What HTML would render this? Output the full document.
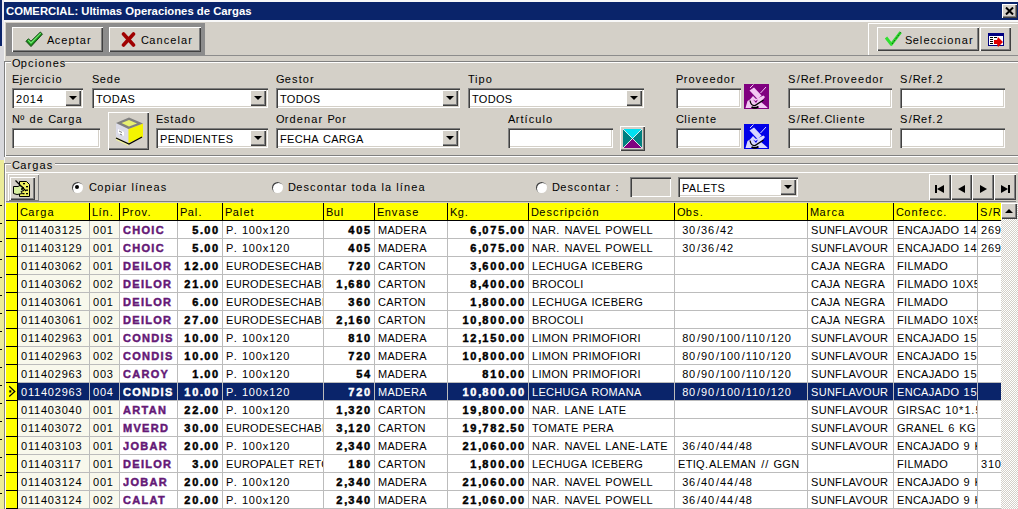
<!DOCTYPE html><html><head><meta charset="utf-8"><style>
html,body{margin:0;padding:0;}
body{width:1018px;height:509px;position:relative;overflow:hidden;background:#d4d0c8;font-family:"Liberation Sans",sans-serif;font-size:12px;color:#000;}
.t{position:absolute;white-space:pre;line-height:14px;font-size:11px;}
.c{position:absolute;white-space:pre;overflow:hidden;line-height:17px;height:17px;font-size:11px;}
i{font-style:normal;}
.d{letter-spacing:0.8px;} .u{letter-spacing:0.3px;} .l{letter-spacing:1.1px;} .s{letter-spacing:1px;padding-left:1px;} .p{letter-spacing:1.1px;}
.b{font-weight:bold;-webkit-text-stroke:0.45px currentColor;}
.b .d{letter-spacing:1.8px;} .b .u{letter-spacing:1.3px;} .b .p{letter-spacing:1px;}
.r{text-align:right;}
.ti i{letter-spacing:0 !important;}
</style></head><body>

<div style="position:absolute;left:0px;top:0px;width:4px;height:509px;background:#ecec98;"></div>
<div style="position:absolute;left:0px;top:46px;width:4px;height:114px;background:#d8d8dc;"></div>
<div style="position:absolute;left:0px;top:0px;width:2px;height:46px;background:#0a246a;"></div>
<div style="position:absolute;left:2px;top:0px;width:2px;height:46px;background:#e8e8f0;"></div>
<div style="position:absolute;left:0px;top:205px;width:2px;height:1px;background:#000;"></div>
<div style="position:absolute;left:0px;top:223px;width:2px;height:1px;background:#000;"></div>
<div style="position:absolute;left:0px;top:241px;width:2px;height:1px;background:#000;"></div>
<div style="position:absolute;left:0px;top:259px;width:2px;height:1px;background:#000;"></div>
<div style="position:absolute;left:0px;top:277px;width:2px;height:1px;background:#000;"></div>
<div style="position:absolute;left:0px;top:295px;width:2px;height:1px;background:#000;"></div>
<div style="position:absolute;left:0px;top:313px;width:2px;height:1px;background:#000;"></div>
<div style="position:absolute;left:0px;top:331px;width:2px;height:1px;background:#000;"></div>
<div style="position:absolute;left:0px;top:349px;width:2px;height:1px;background:#000;"></div>
<div style="position:absolute;left:0px;top:367px;width:2px;height:1px;background:#000;"></div>
<div style="position:absolute;left:0px;top:385px;width:2px;height:1px;background:#000;"></div>
<div style="position:absolute;left:0px;top:403px;width:2px;height:1px;background:#000;"></div>
<div style="position:absolute;left:0px;top:421px;width:2px;height:1px;background:#000;"></div>
<div style="position:absolute;left:0px;top:439px;width:2px;height:1px;background:#000;"></div>
<div style="position:absolute;left:0px;top:457px;width:2px;height:1px;background:#000;"></div>
<div style="position:absolute;left:0px;top:475px;width:2px;height:1px;background:#000;"></div>
<div style="position:absolute;left:0px;top:493px;width:2px;height:1px;background:#000;"></div>
<div style="position:absolute;left:4px;top:0px;width:1014px;height:2px;background:#f8f8f8;"></div>
<div style="position:absolute;left:4px;top:2px;width:1014px;height:18px;background:#0a246a;"></div>
<div class="t" style="left:6px;top:4px;color:#fff;font-weight:bold;font-size:11.3px;">COMERCIAL: Ultimas Operaciones de Cargas</div>
<div style="position:absolute;left:4px;top:20px;width:1014px;height:2px;background:#f8f8f8;"></div>
<div style="position:absolute;left:1002px;top:4px;width:15px;height:14px;background:#d4d0c8;box-shadow:inset 1px 1px 0 #fff, inset -1px -1px 0 #404040, inset -2px -2px 0 #808080;"></div>
<svg style="position:absolute;left:1005px;top:7px" width="9" height="8" viewBox="0 0 9 8"><path d="M1 0.5 L8 7.5 M8 0.5 L1 7.5" stroke="#000" stroke-width="2"/></svg>
<div style="position:absolute;left:4px;top:22px;width:1px;height:487px;background:#f4f4f0;"></div>
<div style="position:absolute;left:6px;top:23px;width:199px;height:33px;background:#8c8c8c;"></div>
<div style="position:absolute;left:12px;top:27px;width:91px;height:25px;background:#d4d0c8;box-shadow:inset 1px 1px 0 #fff, inset -1px -1px 0 #404040, inset -2px -2px 0 #808080;"></div>
<div style="position:absolute;left:109px;top:27px;width:92px;height:25px;background:#d4d0c8;box-shadow:inset 1px 1px 0 #fff, inset -1px -1px 0 #404040, inset -2px -2px 0 #808080;"></div>
<svg style="position:absolute;left:18px;top:26px" width="30" height="26" viewBox="0 0 30 26"><path d="M8 15.3 L10.4 12.8 L13 15.2 L22.4 6 L24.4 8.2 L13 20.6 Z" fill="#189018" stroke="#0a3a0a" stroke-width="0.9" stroke-linejoin="round"/><path d="M9.6 14.2 L10.4 13.4 L13 15.9 L22.4 6.8 L23.2 7.6 L13 18 Z" fill="#70e870"/></svg>
<div class="t" style="left:47px;top:33px;"><i class="u">A</i><i class="l">ceptar</i></div>
<svg style="position:absolute;left:121px;top:32px" width="15" height="15" viewBox="0 0 15 15"><path d="M2.5 2 L12.5 13 M12.5 2 L2.5 13" fill="none" stroke="#a00000" stroke-width="3.6" stroke-linecap="round"/></svg>
<div class="t" style="left:141px;top:33px;"><i class="u">C</i><i class="l">ancelar</i></div>
<div style="position:absolute;left:205px;top:55px;width:813px;height:1px;background:#8c8c8c;"></div>
<div style="position:absolute;left:868px;top:23px;width:150px;height:32px;background:#d4d0c8;box-shadow:inset 1px 1px 0 #fff;"></div>
<div style="position:absolute;left:877px;top:27px;width:102px;height:24px;background:#d4d0c8;box-shadow:inset 1px 1px 0 #fff, inset -1px -1px 0 #404040, inset -2px -2px 0 #808080;"></div>
<svg style="position:absolute;left:884px;top:31px" width="18" height="16" viewBox="0 0 18 16"><path d="M2 6.5 L7.3 13.3 L16.7 1.2" fill="none" stroke="#30e030" stroke-width="3" stroke-linejoin="round"/><path d="M8 13 L16.7 1.2" fill="none" stroke="#000" stroke-width="0.8" stroke-dasharray="1 1"/></svg>
<div class="t" style="left:905px;top:33px;"><i class="u">S</i><i class="l">eleccionar</i></div>
<div style="position:absolute;left:980px;top:27px;width:31px;height:24px;background:#d4d0c8;box-shadow:inset 1px 1px 0 #fff, inset -1px -1px 0 #404040, inset -2px -2px 0 #808080;"></div>
<svg style="position:absolute;left:988px;top:33px" width="16" height="14" viewBox="0 0 16 14">
<rect x="0" y="0" width="16" height="13" fill="#000080"/>
<rect x="1" y="3" width="14" height="9" fill="#fff"/>
<rect x="2" y="4" width="3" height="1" fill="#000"/><rect x="2" y="6" width="3" height="1" fill="#000"/><rect x="2" y="8" width="3" height="1" fill="#000"/><rect x="2" y="10" width="3" height="1" fill="#000"/>
<rect x="6" y="4" width="3" height="1" fill="#000"/>
<path d="M6 7 L9 7 L10 4 L15 9 L10 14 L9 11 L6 11 Z" fill="#e00000"/>
</svg>
<div style="position:absolute;left:4px;top:61px;width:1020px;height:96px;box-shadow:inset 1px 1px 0 #808080, inset 2px 2px 0 #fff, inset -1px -1px 0 #fff, inset -2px -2px 0 #808080;"></div>
<div style="position:absolute;left:11px;top:58px;width:54px;height:9px;background:#d4d0c8;"></div>
<div class="t" style="left:12px;top:56px;"><i class="u">O</i><i class="l">pciones</i></div>
<div class="t" style="left:12px;top:72px;"><i class="u">E</i><i class="l">jercicio</i></div>
<div style="position:absolute;left:12px;top:88px;width:71px;height:20px;background:#fff;box-shadow:inset 1px 1px 0 #808080, inset 2px 2px 0 #404040, inset -1px -1px 0 #fff, inset -2px -2px 0 #d4d0c8;"></div>
<div style="position:absolute;left:65px;top:90px;width:16px;height:16px;background:#d4d0c8;box-shadow:inset 1px 1px 0 #fff, inset -1px -1px 0 #404040, inset -2px -2px 0 #808080;"></div>
<div style="position:absolute;left:69px;top:96px;width:0;height:0;border-left:4px solid transparent;border-right:4px solid transparent;border-top:4px solid #000;"></div>
<div class="t" style="left:16px;top:92px;"><i class="d">2014</i></div>
<div class="t" style="left:92px;top:72px;"><i class="u">S</i><i class="l">ede</i></div>
<div style="position:absolute;left:92px;top:88px;width:176px;height:20px;background:#fff;box-shadow:inset 1px 1px 0 #808080, inset 2px 2px 0 #404040, inset -1px -1px 0 #fff, inset -2px -2px 0 #d4d0c8;"></div>
<div style="position:absolute;left:250px;top:90px;width:16px;height:16px;background:#d4d0c8;box-shadow:inset 1px 1px 0 #fff, inset -1px -1px 0 #404040, inset -2px -2px 0 #808080;"></div>
<div style="position:absolute;left:254px;top:96px;width:0;height:0;border-left:4px solid transparent;border-right:4px solid transparent;border-top:4px solid #000;"></div>
<div class="t" style="left:96px;top:92px;"><i class="u">TODAS</i></div>
<div class="t" style="left:276px;top:72px;"><i class="u">G</i><i class="l">estor</i></div>
<div style="position:absolute;left:276px;top:88px;width:184px;height:20px;background:#fff;box-shadow:inset 1px 1px 0 #808080, inset 2px 2px 0 #404040, inset -1px -1px 0 #fff, inset -2px -2px 0 #d4d0c8;"></div>
<div style="position:absolute;left:442px;top:90px;width:16px;height:16px;background:#d4d0c8;box-shadow:inset 1px 1px 0 #fff, inset -1px -1px 0 #404040, inset -2px -2px 0 #808080;"></div>
<div style="position:absolute;left:446px;top:96px;width:0;height:0;border-left:4px solid transparent;border-right:4px solid transparent;border-top:4px solid #000;"></div>
<div class="t" style="left:280px;top:92px;"><i class="u">TODOS</i></div>
<div class="t" style="left:468px;top:72px;"><i class="u">T</i><i class="l">ipo</i></div>
<div style="position:absolute;left:468px;top:88px;width:176px;height:20px;background:#fff;box-shadow:inset 1px 1px 0 #808080, inset 2px 2px 0 #404040, inset -1px -1px 0 #fff, inset -2px -2px 0 #d4d0c8;"></div>
<div style="position:absolute;left:626px;top:90px;width:16px;height:16px;background:#d4d0c8;box-shadow:inset 1px 1px 0 #fff, inset -1px -1px 0 #404040, inset -2px -2px 0 #808080;"></div>
<div style="position:absolute;left:630px;top:96px;width:0;height:0;border-left:4px solid transparent;border-right:4px solid transparent;border-top:4px solid #000;"></div>
<div class="t" style="left:472px;top:92px;"><i class="u">TODOS</i></div>
<div class="t" style="left:676px;top:72px;"><i class="u">P</i><i class="l">roveedor</i></div>
<div style="position:absolute;left:676px;top:88px;width:65px;height:20px;background:#fff;box-shadow:inset 1px 1px 0 #808080, inset 2px 2px 0 #404040, inset -1px -1px 0 #fff, inset -2px -2px 0 #d4d0c8;"></div>
<div class="t" style="left:788px;top:72px;"><i class="u">S</i><i class="s">/</i><i class="u">R</i><i class="l">ef</i><i class="p">.</i><i class="u">P</i><i class="l">roveedor</i></div>
<div style="position:absolute;left:788px;top:88px;width:104px;height:20px;background:#fff;box-shadow:inset 1px 1px 0 #808080, inset 2px 2px 0 #404040, inset -1px -1px 0 #fff, inset -2px -2px 0 #d4d0c8;"></div>
<div class="t" style="left:900px;top:72px;"><i class="u">S</i><i class="s">/</i><i class="u">R</i><i class="l">ef</i><i class="p">.</i><i class="d">2</i></div>
<div style="position:absolute;left:900px;top:88px;width:105px;height:20px;background:#fff;box-shadow:inset 1px 1px 0 #808080, inset 2px 2px 0 #404040, inset -1px -1px 0 #fff, inset -2px -2px 0 #d4d0c8;"></div>
<div class="t" style="left:12px;top:112px;"><i class="u">N</i><i class="l">º</i><i class="p"> </i><i class="l">de</i><i class="p"> </i><i class="u">C</i><i class="l">arga</i></div>
<div style="position:absolute;left:12px;top:128px;width:88px;height:20px;background:#fff;box-shadow:inset 1px 1px 0 #808080, inset 2px 2px 0 #404040, inset -1px -1px 0 #fff, inset -2px -2px 0 #d4d0c8;"></div>
<div style="position:absolute;left:108px;top:112px;width:41px;height:38px;background:#d4d0c8;box-shadow:inset 1px 1px 0 #fff, inset -1px -1px 0 #404040, inset -2px -2px 0 #808080;"></div>
<div class="t" style="left:156px;top:112px;"><i class="u">E</i><i class="l">stado</i></div>
<div style="position:absolute;left:156px;top:128px;width:112px;height:20px;background:#fff;box-shadow:inset 1px 1px 0 #808080, inset 2px 2px 0 #404040, inset -1px -1px 0 #fff, inset -2px -2px 0 #d4d0c8;"></div>
<div style="position:absolute;left:250px;top:130px;width:16px;height:16px;background:#d4d0c8;box-shadow:inset 1px 1px 0 #fff, inset -1px -1px 0 #404040, inset -2px -2px 0 #808080;"></div>
<div style="position:absolute;left:254px;top:136px;width:0;height:0;border-left:4px solid transparent;border-right:4px solid transparent;border-top:4px solid #000;"></div>
<div class="t" style="left:160px;top:132px;"><i class="u">PENDIENTES</i></div>
<div class="t" style="left:276px;top:112px;"><i class="u">O</i><i class="l">rdenar</i><i class="p"> </i><i class="u">P</i><i class="l">or</i></div>
<div style="position:absolute;left:276px;top:128px;width:184px;height:20px;background:#fff;box-shadow:inset 1px 1px 0 #808080, inset 2px 2px 0 #404040, inset -1px -1px 0 #fff, inset -2px -2px 0 #d4d0c8;"></div>
<div style="position:absolute;left:442px;top:130px;width:16px;height:16px;background:#d4d0c8;box-shadow:inset 1px 1px 0 #fff, inset -1px -1px 0 #404040, inset -2px -2px 0 #808080;"></div>
<div style="position:absolute;left:446px;top:136px;width:0;height:0;border-left:4px solid transparent;border-right:4px solid transparent;border-top:4px solid #000;"></div>
<div class="t" style="left:280px;top:132px;"><i class="u">FECHA</i><i class="p"> </i><i class="u">CARGA</i></div>
<div class="t" style="left:508px;top:112px;"><i class="u">A</i><i class="l">rtículo</i></div>
<div style="position:absolute;left:508px;top:128px;width:105px;height:20px;background:#fff;box-shadow:inset 1px 1px 0 #808080, inset 2px 2px 0 #404040, inset -1px -1px 0 #fff, inset -2px -2px 0 #d4d0c8;"></div>
<div style="position:absolute;left:620px;top:126px;width:25px;height:25px;background:#d4d0c8;box-shadow:inset 1px 1px 0 #fff, inset -1px -1px 0 #404040, inset -2px -2px 0 #808080;"></div>
<div class="t" style="left:676px;top:112px;"><i class="u">C</i><i class="l">liente</i></div>
<div style="position:absolute;left:676px;top:128px;width:65px;height:20px;background:#fff;box-shadow:inset 1px 1px 0 #808080, inset 2px 2px 0 #404040, inset -1px -1px 0 #fff, inset -2px -2px 0 #d4d0c8;"></div>
<div class="t" style="left:788px;top:112px;"><i class="u">S</i><i class="s">/</i><i class="u">R</i><i class="l">ef</i><i class="p">.</i><i class="u">C</i><i class="l">liente</i></div>
<div style="position:absolute;left:788px;top:128px;width:104px;height:20px;background:#fff;box-shadow:inset 1px 1px 0 #808080, inset 2px 2px 0 #404040, inset -1px -1px 0 #fff, inset -2px -2px 0 #d4d0c8;"></div>
<div class="t" style="left:900px;top:112px;"><i class="u">S</i><i class="s">/</i><i class="u">R</i><i class="l">ef</i><i class="p">.</i><i class="d">2</i></div>
<div style="position:absolute;left:900px;top:128px;width:105px;height:20px;background:#fff;box-shadow:inset 1px 1px 0 #808080, inset 2px 2px 0 #404040, inset -1px -1px 0 #fff, inset -2px -2px 0 #d4d0c8;"></div>
<svg style="position:absolute;left:744px;top:84px" width="25" height="25" viewBox="0 0 25 25">
<rect x="0" y="0" width="25" height="25" fill="#800080"/>
<path d="M6 4 L9.5 0.5 M16.5 9 L22 3" stroke="#f4c8f4" stroke-width="1"/>
<path d="M5.5 6.5 L10 3.5 L17.5 11.5 L13.5 15 Z" fill="#f4c8f4"/>
<path d="M1.5 24 L3.5 17 L6 15.5 L9 12 L12 15 L19.5 11.5 L21 13 L17 18 L23.5 23.5 L23.5 24 Z" fill="#f4c8f4"/>
<path d="M9 15.5 L11.5 17 L14 15.5 L12 19 Z" fill="#800080"/>
<path d="M6 16.5 Q7 22 11 21.5 L19.5 16" fill="none" stroke="#000" stroke-width="1.3"/>
<path d="M7.5 23 Q11 25 14.5 22.5" fill="none" stroke="#000" stroke-width="1.8"/>
</svg>
<svg style="position:absolute;left:744px;top:124px" width="25" height="25" viewBox="0 0 25 25">
<rect x="0" y="0" width="25" height="25" fill="#0000e8"/>
<path d="M6 4 L9.5 0.5 M16.5 9 L22 3" stroke="#d8d8ff" stroke-width="1"/>
<path d="M5.5 6.5 L10 3.5 L17.5 11.5 L13.5 15 Z" fill="#d8d8ff"/>
<path d="M1.5 24 L3.5 17 L6 15.5 L9 12 L12 15 L19.5 11.5 L21 13 L17 18 L23.5 23.5 L23.5 24 Z" fill="#d8d8ff"/>
<path d="M9 15.5 L11.5 17 L14 15.5 L12 19 Z" fill="#0000e8"/>
<path d="M6 16.5 Q7 22 11 21.5 L19.5 16" fill="none" stroke="#000" stroke-width="1.3"/>
<path d="M7.5 23 Q11 25 14.5 22.5" fill="none" stroke="#000" stroke-width="1.8"/>
</svg>
<svg style="position:absolute;left:108px;top:112px" width="41" height="38" viewBox="0 0 41 38">
<path d="M8 25 L20.5 31 L20.5 34 L8 28 Z" fill="#f4f4a0"/>
<path d="M8 11 L20.5 17 L20.5 31 L8 25 Z" fill="#dcdce8"/>
<path d="M10 17 L16 20 L16 24 L10 21 Z" fill="#fff"/>
<path d="M20.5 17 L35 11.5 L35 25 L20.5 31 Z" fill="#f4f400"/>
<path d="M8 11 L21 5.5 L35 11.5 L20.5 17 Z" fill="#808080"/>
<path d="M13.5 11 L21 8 L29 11.5 L21 14.5 Z" fill="#e8f070"/>
<path d="M8 26 L21 32 L34 25" fill="none" stroke="#000" stroke-width="1.3"/>
<path d="M11 19 L14 20.5 M12 22 L14 23" stroke="#606060" stroke-width="0.8"/>
</svg>
<svg style="position:absolute;left:623px;top:129px" width="19" height="19" viewBox="0 0 19 19">
<path d="M0 0 L19 0 L9.5 9.5 Z" fill="#00e0f0"/>
<path d="M0 19 L19 19 L9.5 9.5 Z" fill="#800080"/>
<path d="M0 0 L9.5 9.5 L0 19 Z" fill="#008080"/>
<path d="M19 0 L9.5 9.5 L19 19 Z" fill="#008080"/>
<path d="M0 0 L19 19 M19 0 L0 19" stroke="#fff" stroke-width="0.8"/>
</svg>
<div style="position:absolute;left:4px;top:163px;width:1020px;height:360px;box-shadow:inset 1px 1px 0 #808080, inset 2px 2px 0 #fff, inset -1px -1px 0 #fff, inset -2px -2px 0 #808080;"></div>
<div style="position:absolute;left:11px;top:159px;width:44px;height:9px;background:#d4d0c8;"></div>
<div class="t" style="left:12px;top:158px;"><i class="u">C</i><i class="l">argas</i></div>
<div style="position:absolute;left:6px;top:172px;width:1012px;height:1px;background:#fff;"></div>
<div style="position:absolute;left:6px;top:201px;width:1010px;height:1px;background:#808080;"></div>
<div style="position:absolute;left:8px;top:174px;width:31px;height:27px;background:#d4d0c8;box-shadow:inset 1px 1px 0 #fff, inset -1px -1px 0 #808080;"></div>
<div style="position:absolute;left:10px;top:177px;width:25px;height:23px;background:#d4d0c8;box-shadow:inset 1px 1px 0 #fff, inset -1px -1px 0 #404040, inset -2px -2px 0 #808080;"></div>
<svg style="position:absolute;left:8px;top:174px" width="30" height="27" viewBox="0 0 30 27">
<path d="M11.5 7.5 L18.5 7.5 L21.5 10.5 L21.5 22.5 L11.5 22.5 Z" fill="#f0f060" stroke="#000" stroke-width="1"/>
<rect x="15" y="9" width="2" height="1.3" fill="#000"/><rect x="18" y="12" width="2" height="1.3" fill="#000"/>
<rect x="18" y="15.5" width="2" height="1.3" fill="#000"/><rect x="14.5" y="19" width="2" height="1.3" fill="#000"/><rect x="18" y="19" width="2" height="1.3" fill="#000"/>
<path d="M5.5 12.5 L10 12.5 L12 11.5 L16 14 L13 15 L16 16.5 L13 17.5 L14.5 19.5 L9 20.5 L5.5 19.5 Z" fill="#d8f0a0" stroke="#000" stroke-width="1"/>
<path d="M7.5 6.5 L18 17" stroke="#000" stroke-width="1.3"/>
</svg>
<div style="position:absolute;left:71.5px;top:181.5px;width:11px;height:11px;border-radius:50%;background:#fff;box-shadow:inset 1px 1px 0 #404040;"></div>
<div style="position:absolute;left:75px;top:185px;width:4px;height:4px;border-radius:50%;background:#000;"></div>
<div class="t" style="left:89px;top:180px;"><i class="u">C</i><i class="l">opiar</i><i class="p"> </i><i class="l">líneas</i></div>
<div style="position:absolute;left:271.5px;top:181.5px;width:11px;height:11px;border-radius:50%;background:#fff;box-shadow:inset 1px 1px 0 #404040;"></div>
<div class="t" style="left:288px;top:180px;"><i class="u">D</i><i class="l">escontar</i><i class="p"> </i><i class="l">toda</i><i class="p"> </i><i class="l">la</i><i class="p"> </i><i class="l">línea</i></div>
<div style="position:absolute;left:535.5px;top:181.5px;width:11px;height:11px;border-radius:50%;background:#fff;box-shadow:inset 1px 1px 0 #404040;"></div>
<div class="t" style="left:552px;top:180px;"><i class="u">D</i><i class="l">escontar</i><i class="p"> :</i></div>
<div style="position:absolute;left:630px;top:177px;width:41px;height:20px;background:#d4d0c8;box-shadow:inset 1px 1px 0 #808080, inset 2px 2px 0 #404040, inset -1px -1px 0 #fff, inset -2px -2px 0 #d4d0c8;"></div>
<div style="position:absolute;left:678px;top:177px;width:120px;height:20px;background:#fff;box-shadow:inset 1px 1px 0 #808080, inset 2px 2px 0 #404040, inset -1px -1px 0 #fff, inset -2px -2px 0 #d4d0c8;"></div>
<div style="position:absolute;left:780px;top:179px;width:16px;height:16px;background:#d4d0c8;box-shadow:inset 1px 1px 0 #fff, inset -1px -1px 0 #404040, inset -2px -2px 0 #808080;"></div>
<div style="position:absolute;left:784px;top:185px;width:0;height:0;border-left:4px solid transparent;border-right:4px solid transparent;border-top:4px solid #000;"></div>
<div class="t" style="left:682px;top:181px;"><i class="u">PALETS</i></div>
<div style="position:absolute;left:929px;top:174px;width:22px;height:26px;background:#d4d0c8;box-shadow:inset 1px 1px 0 #fff, inset -1px -1px 0 #404040, inset -2px -2px 0 #808080;"></div>
<div style="position:absolute;left:935px;top:185px;width:2px;height:8px;background:#000"></div>
<div style="position:absolute;left:937px;top:185px;width:0;height:0;border-top:4px solid transparent;border-bottom:4px solid transparent;border-right:7px solid #000"></div>
<div style="position:absolute;left:951px;top:174px;width:21px;height:26px;background:#d4d0c8;box-shadow:inset 1px 1px 0 #fff, inset -1px -1px 0 #404040, inset -2px -2px 0 #808080;"></div>
<div style="position:absolute;left:958px;top:185px;width:0;height:0;border-top:4px solid transparent;border-bottom:4px solid transparent;border-right:7px solid #000"></div>
<div style="position:absolute;left:972px;top:174px;width:22px;height:26px;background:#d4d0c8;box-shadow:inset 1px 1px 0 #fff, inset -1px -1px 0 #404040, inset -2px -2px 0 #808080;"></div>
<div style="position:absolute;left:980px;top:185px;width:0;height:0;border-top:4px solid transparent;border-bottom:4px solid transparent;border-left:7px solid #000"></div>
<div style="position:absolute;left:994px;top:174px;width:22px;height:26px;background:#d4d0c8;box-shadow:inset 1px 1px 0 #fff, inset -1px -1px 0 #404040, inset -2px -2px 0 #808080;"></div>
<div style="position:absolute;left:1001px;top:185px;width:0;height:0;border-top:4px solid transparent;border-bottom:4px solid transparent;border-left:7px solid #000"></div>
<div style="position:absolute;left:1008px;top:185px;width:2px;height:8px;background:#000"></div>
<div style="position:absolute;left:6px;top:203px;width:995px;height:306px;background:#fff;"></div>
<div style="position:absolute;left:6px;top:203px;width:995px;height:17px;background:#ffff00;"></div>
<div style="position:absolute;left:6px;top:220px;width:995px;height:1px;background:#000;"></div>
<div style="position:absolute;left:6px;top:221px;width:11px;height:288px;background:#ffff00;"></div>
<div style="position:absolute;left:17px;top:203px;width:1px;height:306px;background:#000;"></div>
<div style="position:absolute;left:89px;top:203px;width:1px;height:17px;background:#000;"></div>
<div style="position:absolute;left:119px;top:203px;width:1px;height:17px;background:#000;"></div>
<div style="position:absolute;left:177px;top:203px;width:1px;height:17px;background:#000;"></div>
<div style="position:absolute;left:222px;top:203px;width:1px;height:17px;background:#000;"></div>
<div style="position:absolute;left:323px;top:203px;width:1px;height:17px;background:#000;"></div>
<div style="position:absolute;left:374px;top:203px;width:1px;height:17px;background:#000;"></div>
<div style="position:absolute;left:447px;top:203px;width:1px;height:17px;background:#000;"></div>
<div style="position:absolute;left:528px;top:203px;width:1px;height:17px;background:#000;"></div>
<div style="position:absolute;left:674px;top:203px;width:1px;height:17px;background:#000;"></div>
<div style="position:absolute;left:807px;top:203px;width:1px;height:17px;background:#000;"></div>
<div style="position:absolute;left:893px;top:203px;width:1px;height:17px;background:#000;"></div>
<div style="position:absolute;left:977px;top:203px;width:1px;height:17px;background:#000;"></div>
<div class="c" style="left:20px;top:204px;width:68px;"><i class="u">C</i><i class="l">arga</i></div>
<div class="c" style="left:92px;top:204px;width:26px;"><i class="u">L</i><i class="l">ín</i><i class="p">.</i></div>
<div class="c" style="left:122px;top:204px;width:54px;"><i class="u">P</i><i class="l">rov</i><i class="p">.</i></div>
<div class="c" style="left:180px;top:204px;width:41px;"><i class="u">P</i><i class="l">al</i><i class="p">.</i></div>
<div class="c" style="left:225px;top:204px;width:97px;"><i class="u">P</i><i class="l">alet</i></div>
<div class="c" style="left:326px;top:204px;width:47px;"><i class="u">B</i><i class="l">ul</i></div>
<div class="c" style="left:377px;top:204px;width:69px;"><i class="u">E</i><i class="l">nvase</i></div>
<div class="c" style="left:450px;top:204px;width:77px;"><i class="u">K</i><i class="l">g</i><i class="p">.</i></div>
<div class="c" style="left:531px;top:204px;width:142px;"><i class="u">D</i><i class="l">escripción</i></div>
<div class="c" style="left:677px;top:204px;width:129px;"><i class="u">O</i><i class="l">bs</i><i class="p">.</i></div>
<div class="c" style="left:810px;top:204px;width:82px;"><i class="u">M</i><i class="l">arca</i></div>
<div class="c" style="left:896px;top:204px;width:80px;"><i class="u">C</i><i class="l">onfecc</i><i class="p">.</i></div>
<div class="c" style="left:980px;top:204px;width:20px;"><i class="u">S</i><i class="s">/</i><i class="u">R</i></div>
<div style="position:absolute;left:18px;top:221px;width:101px;height:17px;background:#f8f8ec;"></div>
<div style="position:absolute;left:18px;top:238px;width:983px;height:1px;background:#bcbcbc;"></div>
<div style="position:absolute;left:6px;top:238px;width:11px;height:1px;background:#000;"></div>
<div class="c" style="left:21px;top:222px;width:68px;color:#000;"><i class="d">011403125</i></div>
<div class="c" style="left:93px;top:222px;width:26px;color:#000;"><i class="d">001</i></div>
<div class="c b" style="left:123px;top:222px;width:54px;color:#641876;"><i class="u">CHOIC</i></div>
<div class="c b r" style="left:178px;top:222px;width:42px;color:#000;"><i class="d">5</i><i class="p">.</i><i class="d">00</i></div>
<div class="c" style="left:226px;top:222px;width:97px;color:#000;"><i class="u">P</i><i class="p">. </i><i class="d">100</i><i class="l">x</i><i class="d">120</i></div>
<div class="c b r" style="left:324px;top:222px;width:48px;color:#000;"><i class="d">405</i></div>
<div class="c" style="left:378px;top:222px;width:69px;color:#000;"><i class="u">MADERA</i></div>
<div class="c b r" style="left:448px;top:222px;width:78px;color:#000;"><i class="d">6</i><i class="p">,</i><i class="d">075</i><i class="p">.</i><i class="d">00</i></div>
<div class="c" style="left:532px;top:222px;width:142px;color:#000;"><i class="u">NAR</i><i class="p">. </i><i class="u">NAVEL</i><i class="p"> </i><i class="u">POWELL</i></div>
<div class="c" style="left:678px;top:222px;width:129px;color:#000;"><i class="p"> </i><i class="d">30</i><i class="s">/</i><i class="d">36</i><i class="s">/</i><i class="d">42</i></div>
<div class="c" style="left:811px;top:222px;width:82px;color:#000;"><i class="u">SUNFLAVOUR</i></div>
<div class="c" style="left:897px;top:222px;width:80px;color:#000;"><i class="u">ENCAJADO</i><i class="p"> </i><i class="d">14</i></div>
<div class="c" style="left:981px;top:222px;width:20px;color:#000;"><i class="d">269</i></div>
<div style="position:absolute;left:18px;top:239px;width:101px;height:17px;background:#f8f8ec;"></div>
<div style="position:absolute;left:18px;top:256px;width:983px;height:1px;background:#bcbcbc;"></div>
<div style="position:absolute;left:6px;top:256px;width:11px;height:1px;background:#000;"></div>
<div class="c" style="left:21px;top:240px;width:68px;color:#000;"><i class="d">011403129</i></div>
<div class="c" style="left:93px;top:240px;width:26px;color:#000;"><i class="d">001</i></div>
<div class="c b" style="left:123px;top:240px;width:54px;color:#641876;"><i class="u">CHOIC</i></div>
<div class="c b r" style="left:178px;top:240px;width:42px;color:#000;"><i class="d">5</i><i class="p">.</i><i class="d">00</i></div>
<div class="c" style="left:226px;top:240px;width:97px;color:#000;"><i class="u">P</i><i class="p">. </i><i class="d">100</i><i class="l">x</i><i class="d">120</i></div>
<div class="c b r" style="left:324px;top:240px;width:48px;color:#000;"><i class="d">405</i></div>
<div class="c" style="left:378px;top:240px;width:69px;color:#000;"><i class="u">MADERA</i></div>
<div class="c b r" style="left:448px;top:240px;width:78px;color:#000;"><i class="d">6</i><i class="p">,</i><i class="d">075</i><i class="p">.</i><i class="d">00</i></div>
<div class="c" style="left:532px;top:240px;width:142px;color:#000;"><i class="u">NAR</i><i class="p">. </i><i class="u">NAVEL</i><i class="p"> </i><i class="u">POWELL</i></div>
<div class="c" style="left:678px;top:240px;width:129px;color:#000;"><i class="p"> </i><i class="d">30</i><i class="s">/</i><i class="d">36</i><i class="s">/</i><i class="d">42</i></div>
<div class="c" style="left:811px;top:240px;width:82px;color:#000;"><i class="u">SUNFLAVOUR</i></div>
<div class="c" style="left:897px;top:240px;width:80px;color:#000;"><i class="u">ENCAJADO</i><i class="p"> </i><i class="d">14</i></div>
<div class="c" style="left:981px;top:240px;width:20px;color:#000;"><i class="d">269</i></div>
<div style="position:absolute;left:18px;top:257px;width:101px;height:17px;background:#f8f8ec;"></div>
<div style="position:absolute;left:18px;top:274px;width:983px;height:1px;background:#bcbcbc;"></div>
<div style="position:absolute;left:6px;top:274px;width:11px;height:1px;background:#000;"></div>
<div class="c" style="left:21px;top:258px;width:68px;color:#000;"><i class="d">011403062</i></div>
<div class="c" style="left:93px;top:258px;width:26px;color:#000;"><i class="d">001</i></div>
<div class="c b" style="left:123px;top:258px;width:54px;color:#641876;"><i class="u">DEILOR</i></div>
<div class="c b r" style="left:178px;top:258px;width:42px;color:#000;"><i class="d">12</i><i class="p">.</i><i class="d">00</i></div>
<div class="c" style="left:226px;top:258px;width:97px;color:#000;"><i class="u">EURODESECHABLE</i></div>
<div class="c b r" style="left:324px;top:258px;width:48px;color:#000;"><i class="d">720</i></div>
<div class="c" style="left:378px;top:258px;width:69px;color:#000;"><i class="u">CARTON</i></div>
<div class="c b r" style="left:448px;top:258px;width:78px;color:#000;"><i class="d">3</i><i class="p">,</i><i class="d">600</i><i class="p">.</i><i class="d">00</i></div>
<div class="c" style="left:532px;top:258px;width:142px;color:#000;"><i class="u">LECHUGA</i><i class="p"> </i><i class="u">ICEBERG</i></div>
<div class="c" style="left:811px;top:258px;width:82px;color:#000;"><i class="u">CAJA</i><i class="p"> </i><i class="u">NEGRA</i></div>
<div class="c" style="left:897px;top:258px;width:80px;color:#000;"><i class="u">FILMADO</i></div>
<div style="position:absolute;left:18px;top:275px;width:101px;height:17px;background:#f8f8ec;"></div>
<div style="position:absolute;left:18px;top:292px;width:983px;height:1px;background:#bcbcbc;"></div>
<div style="position:absolute;left:6px;top:292px;width:11px;height:1px;background:#000;"></div>
<div class="c" style="left:21px;top:276px;width:68px;color:#000;"><i class="d">011403062</i></div>
<div class="c" style="left:93px;top:276px;width:26px;color:#000;"><i class="d">002</i></div>
<div class="c b" style="left:123px;top:276px;width:54px;color:#641876;"><i class="u">DEILOR</i></div>
<div class="c b r" style="left:178px;top:276px;width:42px;color:#000;"><i class="d">21</i><i class="p">.</i><i class="d">00</i></div>
<div class="c" style="left:226px;top:276px;width:97px;color:#000;"><i class="u">EURODESECHABLE</i></div>
<div class="c b r" style="left:324px;top:276px;width:48px;color:#000;"><i class="d">1</i><i class="p">,</i><i class="d">680</i></div>
<div class="c" style="left:378px;top:276px;width:69px;color:#000;"><i class="u">CARTON</i></div>
<div class="c b r" style="left:448px;top:276px;width:78px;color:#000;"><i class="d">8</i><i class="p">,</i><i class="d">400</i><i class="p">.</i><i class="d">00</i></div>
<div class="c" style="left:532px;top:276px;width:142px;color:#000;"><i class="u">BROCOLI</i></div>
<div class="c" style="left:811px;top:276px;width:82px;color:#000;"><i class="u">CAJA</i><i class="p"> </i><i class="u">NEGRA</i></div>
<div class="c" style="left:897px;top:276px;width:80px;color:#000;"><i class="u">FILMADO</i><i class="p"> </i><i class="d">10</i><i class="u">X</i><i class="d">5</i></div>
<div style="position:absolute;left:18px;top:293px;width:101px;height:17px;background:#f8f8ec;"></div>
<div style="position:absolute;left:18px;top:310px;width:983px;height:1px;background:#bcbcbc;"></div>
<div style="position:absolute;left:6px;top:310px;width:11px;height:1px;background:#000;"></div>
<div class="c" style="left:21px;top:294px;width:68px;color:#000;"><i class="d">011403061</i></div>
<div class="c" style="left:93px;top:294px;width:26px;color:#000;"><i class="d">001</i></div>
<div class="c b" style="left:123px;top:294px;width:54px;color:#641876;"><i class="u">DEILOR</i></div>
<div class="c b r" style="left:178px;top:294px;width:42px;color:#000;"><i class="d">6</i><i class="p">.</i><i class="d">00</i></div>
<div class="c" style="left:226px;top:294px;width:97px;color:#000;"><i class="u">EURODESECHABLE</i></div>
<div class="c b r" style="left:324px;top:294px;width:48px;color:#000;"><i class="d">360</i></div>
<div class="c" style="left:378px;top:294px;width:69px;color:#000;"><i class="u">CARTON</i></div>
<div class="c b r" style="left:448px;top:294px;width:78px;color:#000;"><i class="d">1</i><i class="p">,</i><i class="d">800</i><i class="p">.</i><i class="d">00</i></div>
<div class="c" style="left:532px;top:294px;width:142px;color:#000;"><i class="u">LECHUGA</i><i class="p"> </i><i class="u">ICEBERG</i></div>
<div class="c" style="left:811px;top:294px;width:82px;color:#000;"><i class="u">CAJA</i><i class="p"> </i><i class="u">NEGRA</i></div>
<div class="c" style="left:897px;top:294px;width:80px;color:#000;"><i class="u">FILMADO</i></div>
<div style="position:absolute;left:18px;top:311px;width:101px;height:17px;background:#f8f8ec;"></div>
<div style="position:absolute;left:18px;top:328px;width:983px;height:1px;background:#bcbcbc;"></div>
<div style="position:absolute;left:6px;top:328px;width:11px;height:1px;background:#000;"></div>
<div class="c" style="left:21px;top:312px;width:68px;color:#000;"><i class="d">011403061</i></div>
<div class="c" style="left:93px;top:312px;width:26px;color:#000;"><i class="d">002</i></div>
<div class="c b" style="left:123px;top:312px;width:54px;color:#641876;"><i class="u">DEILOR</i></div>
<div class="c b r" style="left:178px;top:312px;width:42px;color:#000;"><i class="d">27</i><i class="p">.</i><i class="d">00</i></div>
<div class="c" style="left:226px;top:312px;width:97px;color:#000;"><i class="u">EURODESECHABLE</i></div>
<div class="c b r" style="left:324px;top:312px;width:48px;color:#000;"><i class="d">2</i><i class="p">,</i><i class="d">160</i></div>
<div class="c" style="left:378px;top:312px;width:69px;color:#000;"><i class="u">CARTON</i></div>
<div class="c b r" style="left:448px;top:312px;width:78px;color:#000;"><i class="d">10</i><i class="p">,</i><i class="d">800</i><i class="p">.</i><i class="d">00</i></div>
<div class="c" style="left:532px;top:312px;width:142px;color:#000;"><i class="u">BROCOLI</i></div>
<div class="c" style="left:811px;top:312px;width:82px;color:#000;"><i class="u">CAJA</i><i class="p"> </i><i class="u">NEGRA</i></div>
<div class="c" style="left:897px;top:312px;width:80px;color:#000;"><i class="u">FILMADO</i><i class="p"> </i><i class="d">10</i><i class="u">X</i><i class="d">5</i></div>
<div style="position:absolute;left:18px;top:329px;width:101px;height:17px;background:#f8f8ec;"></div>
<div style="position:absolute;left:18px;top:346px;width:983px;height:1px;background:#bcbcbc;"></div>
<div style="position:absolute;left:6px;top:346px;width:11px;height:1px;background:#000;"></div>
<div class="c" style="left:21px;top:330px;width:68px;color:#000;"><i class="d">011402963</i></div>
<div class="c" style="left:93px;top:330px;width:26px;color:#000;"><i class="d">001</i></div>
<div class="c b" style="left:123px;top:330px;width:54px;color:#641876;"><i class="u">CONDIS</i></div>
<div class="c b r" style="left:178px;top:330px;width:42px;color:#000;"><i class="d">10</i><i class="p">.</i><i class="d">00</i></div>
<div class="c" style="left:226px;top:330px;width:97px;color:#000;"><i class="u">P</i><i class="p">. </i><i class="d">100</i><i class="l">x</i><i class="d">120</i></div>
<div class="c b r" style="left:324px;top:330px;width:48px;color:#000;"><i class="d">810</i></div>
<div class="c" style="left:378px;top:330px;width:69px;color:#000;"><i class="u">MADERA</i></div>
<div class="c b r" style="left:448px;top:330px;width:78px;color:#000;"><i class="d">12</i><i class="p">,</i><i class="d">150</i><i class="p">.</i><i class="d">00</i></div>
<div class="c" style="left:532px;top:330px;width:142px;color:#000;"><i class="u">LIMON</i><i class="p"> </i><i class="u">PRIMOFIORI</i></div>
<div class="c" style="left:678px;top:330px;width:129px;color:#000;"><i class="p"> </i><i class="d">80</i><i class="s">/</i><i class="d">90</i><i class="s">/</i><i class="d">100</i><i class="s">/</i><i class="d">110</i><i class="s">/</i><i class="d">120</i></div>
<div class="c" style="left:811px;top:330px;width:82px;color:#000;"><i class="u">SUNFLAVOUR</i></div>
<div class="c" style="left:897px;top:330px;width:80px;color:#000;"><i class="u">ENCAJADO</i><i class="p"> </i><i class="d">15</i></div>
<div style="position:absolute;left:18px;top:347px;width:101px;height:17px;background:#f8f8ec;"></div>
<div style="position:absolute;left:18px;top:364px;width:983px;height:1px;background:#bcbcbc;"></div>
<div style="position:absolute;left:6px;top:364px;width:11px;height:1px;background:#000;"></div>
<div class="c" style="left:21px;top:348px;width:68px;color:#000;"><i class="d">011402963</i></div>
<div class="c" style="left:93px;top:348px;width:26px;color:#000;"><i class="d">002</i></div>
<div class="c b" style="left:123px;top:348px;width:54px;color:#641876;"><i class="u">CONDIS</i></div>
<div class="c b r" style="left:178px;top:348px;width:42px;color:#000;"><i class="d">10</i><i class="p">.</i><i class="d">00</i></div>
<div class="c" style="left:226px;top:348px;width:97px;color:#000;"><i class="u">P</i><i class="p">. </i><i class="d">100</i><i class="l">x</i><i class="d">120</i></div>
<div class="c b r" style="left:324px;top:348px;width:48px;color:#000;"><i class="d">720</i></div>
<div class="c" style="left:378px;top:348px;width:69px;color:#000;"><i class="u">MADERA</i></div>
<div class="c b r" style="left:448px;top:348px;width:78px;color:#000;"><i class="d">10</i><i class="p">,</i><i class="d">800</i><i class="p">.</i><i class="d">00</i></div>
<div class="c" style="left:532px;top:348px;width:142px;color:#000;"><i class="u">LIMON</i><i class="p"> </i><i class="u">PRIMOFIORI</i></div>
<div class="c" style="left:678px;top:348px;width:129px;color:#000;"><i class="p"> </i><i class="d">80</i><i class="s">/</i><i class="d">90</i><i class="s">/</i><i class="d">100</i><i class="s">/</i><i class="d">110</i><i class="s">/</i><i class="d">120</i></div>
<div class="c" style="left:811px;top:348px;width:82px;color:#000;"><i class="u">SUNFLAVOUR</i></div>
<div class="c" style="left:897px;top:348px;width:80px;color:#000;"><i class="u">ENCAJADO</i><i class="p"> </i><i class="d">15</i></div>
<div style="position:absolute;left:18px;top:365px;width:101px;height:17px;background:#f8f8ec;"></div>
<div style="position:absolute;left:18px;top:382px;width:983px;height:1px;background:#bcbcbc;"></div>
<div style="position:absolute;left:6px;top:382px;width:11px;height:1px;background:#000;"></div>
<div class="c" style="left:21px;top:366px;width:68px;color:#000;"><i class="d">011402963</i></div>
<div class="c" style="left:93px;top:366px;width:26px;color:#000;"><i class="d">003</i></div>
<div class="c b" style="left:123px;top:366px;width:54px;color:#641876;"><i class="u">CAROY</i></div>
<div class="c b r" style="left:178px;top:366px;width:42px;color:#000;"><i class="d">1</i><i class="p">.</i><i class="d">00</i></div>
<div class="c" style="left:226px;top:366px;width:97px;color:#000;"><i class="u">P</i><i class="p">. </i><i class="d">100</i><i class="l">x</i><i class="d">120</i></div>
<div class="c b r" style="left:324px;top:366px;width:48px;color:#000;"><i class="d">54</i></div>
<div class="c" style="left:378px;top:366px;width:69px;color:#000;"><i class="u">MADERA</i></div>
<div class="c b r" style="left:448px;top:366px;width:78px;color:#000;"><i class="d">810</i><i class="p">.</i><i class="d">00</i></div>
<div class="c" style="left:532px;top:366px;width:142px;color:#000;"><i class="u">LIMON</i><i class="p"> </i><i class="u">PRIMOFIORI</i></div>
<div class="c" style="left:678px;top:366px;width:129px;color:#000;"><i class="p"> </i><i class="d">80</i><i class="s">/</i><i class="d">90</i><i class="s">/</i><i class="d">100</i><i class="s">/</i><i class="d">110</i><i class="s">/</i><i class="d">120</i></div>
<div class="c" style="left:811px;top:366px;width:82px;color:#000;"><i class="u">SUNFLAVOUR</i></div>
<div class="c" style="left:897px;top:366px;width:80px;color:#000;"><i class="u">ENCAJADO</i><i class="p"> </i><i class="d">15</i></div>
<div style="position:absolute;left:18px;top:383px;width:983px;height:17px;background:#0a246a;"></div>
<div style="position:absolute;left:18px;top:400px;width:983px;height:1px;background:#bcbcbc;"></div>
<div style="position:absolute;left:6px;top:400px;width:11px;height:1px;background:#000;"></div>
<div class="c" style="left:21px;top:384px;width:68px;color:#fff;"><i class="d">011402963</i></div>
<div class="c" style="left:93px;top:384px;width:26px;color:#fff;"><i class="d">004</i></div>
<div class="c b" style="left:123px;top:384px;width:54px;color:#fff;"><i class="u">CONDIS</i></div>
<div class="c b r" style="left:178px;top:384px;width:42px;color:#fff;"><i class="d">10</i><i class="p">.</i><i class="d">00</i></div>
<div class="c" style="left:226px;top:384px;width:97px;color:#fff;"><i class="u">P</i><i class="p">. </i><i class="d">100</i><i class="l">x</i><i class="d">120</i></div>
<div class="c b r" style="left:324px;top:384px;width:48px;color:#fff;"><i class="d">720</i></div>
<div class="c" style="left:378px;top:384px;width:69px;color:#fff;"><i class="u">MADERA</i></div>
<div class="c b r" style="left:448px;top:384px;width:78px;color:#fff;"><i class="d">10</i><i class="p">,</i><i class="d">800</i><i class="p">.</i><i class="d">00</i></div>
<div class="c" style="left:532px;top:384px;width:142px;color:#fff;"><i class="u">LECHUGA</i><i class="p"> </i><i class="u">ROMANA</i></div>
<div class="c" style="left:678px;top:384px;width:129px;color:#fff;"><i class="p"> </i><i class="d">80</i><i class="s">/</i><i class="d">90</i><i class="s">/</i><i class="d">100</i><i class="s">/</i><i class="d">110</i><i class="s">/</i><i class="d">120</i></div>
<div class="c" style="left:811px;top:384px;width:82px;color:#fff;"><i class="u">SUNFLAVOUR</i></div>
<div class="c" style="left:897px;top:384px;width:80px;color:#fff;"><i class="u">ENCAJADO</i><i class="p"> </i><i class="d">15</i></div>
<div style="position:absolute;left:18px;top:401px;width:101px;height:17px;background:#f8f8ec;"></div>
<div style="position:absolute;left:18px;top:418px;width:983px;height:1px;background:#bcbcbc;"></div>
<div style="position:absolute;left:6px;top:418px;width:11px;height:1px;background:#000;"></div>
<div class="c" style="left:21px;top:402px;width:68px;color:#000;"><i class="d">011403040</i></div>
<div class="c" style="left:93px;top:402px;width:26px;color:#000;"><i class="d">001</i></div>
<div class="c b" style="left:123px;top:402px;width:54px;color:#641876;"><i class="u">ARTAN</i></div>
<div class="c b r" style="left:178px;top:402px;width:42px;color:#000;"><i class="d">22</i><i class="p">.</i><i class="d">00</i></div>
<div class="c" style="left:226px;top:402px;width:97px;color:#000;"><i class="u">P</i><i class="p">. </i><i class="d">100</i><i class="l">x</i><i class="d">120</i></div>
<div class="c b r" style="left:324px;top:402px;width:48px;color:#000;"><i class="d">1</i><i class="p">,</i><i class="d">320</i></div>
<div class="c" style="left:378px;top:402px;width:69px;color:#000;"><i class="u">CARTON</i></div>
<div class="c b r" style="left:448px;top:402px;width:78px;color:#000;"><i class="d">19</i><i class="p">,</i><i class="d">800</i><i class="p">.</i><i class="d">00</i></div>
<div class="c" style="left:532px;top:402px;width:142px;color:#000;"><i class="u">NAR</i><i class="p">. </i><i class="u">LANE</i><i class="p"> </i><i class="u">LATE</i></div>
<div class="c" style="left:811px;top:402px;width:82px;color:#000;"><i class="u">SUNFLAVOUR</i></div>
<div class="c" style="left:897px;top:402px;width:80px;color:#000;"><i class="u">GIRSAC</i><i class="p"> </i><i class="d">10</i><i class="p">*</i><i class="d">1</i><i class="p">.</i><i class="d">5</i></div>
<div style="position:absolute;left:18px;top:419px;width:101px;height:17px;background:#f8f8ec;"></div>
<div style="position:absolute;left:18px;top:436px;width:983px;height:1px;background:#bcbcbc;"></div>
<div style="position:absolute;left:6px;top:436px;width:11px;height:1px;background:#000;"></div>
<div class="c" style="left:21px;top:420px;width:68px;color:#000;"><i class="d">011403072</i></div>
<div class="c" style="left:93px;top:420px;width:26px;color:#000;"><i class="d">001</i></div>
<div class="c b" style="left:123px;top:420px;width:54px;color:#641876;"><i class="u">MVERD</i></div>
<div class="c b r" style="left:178px;top:420px;width:42px;color:#000;"><i class="d">30</i><i class="p">.</i><i class="d">00</i></div>
<div class="c" style="left:226px;top:420px;width:97px;color:#000;"><i class="u">EURODESECHABLE</i></div>
<div class="c b r" style="left:324px;top:420px;width:48px;color:#000;"><i class="d">3</i><i class="p">,</i><i class="d">120</i></div>
<div class="c" style="left:378px;top:420px;width:69px;color:#000;"><i class="u">CARTON</i></div>
<div class="c b r" style="left:448px;top:420px;width:78px;color:#000;"><i class="d">19</i><i class="p">,</i><i class="d">782</i><i class="p">.</i><i class="d">50</i></div>
<div class="c" style="left:532px;top:420px;width:142px;color:#000;"><i class="u">TOMATE</i><i class="p"> </i><i class="u">PERA</i></div>
<div class="c" style="left:811px;top:420px;width:82px;color:#000;"><i class="u">SUNFLAVOUR</i></div>
<div class="c" style="left:897px;top:420px;width:80px;color:#000;"><i class="u">GRANEL</i><i class="p"> </i><i class="d">6</i><i class="p"> </i><i class="u">KG</i></div>
<div style="position:absolute;left:18px;top:437px;width:101px;height:17px;background:#f8f8ec;"></div>
<div style="position:absolute;left:18px;top:454px;width:983px;height:1px;background:#bcbcbc;"></div>
<div style="position:absolute;left:6px;top:454px;width:11px;height:1px;background:#000;"></div>
<div class="c" style="left:21px;top:438px;width:68px;color:#000;"><i class="d">011403103</i></div>
<div class="c" style="left:93px;top:438px;width:26px;color:#000;"><i class="d">001</i></div>
<div class="c b" style="left:123px;top:438px;width:54px;color:#641876;"><i class="u">JOBAR</i></div>
<div class="c b r" style="left:178px;top:438px;width:42px;color:#000;"><i class="d">20</i><i class="p">.</i><i class="d">00</i></div>
<div class="c" style="left:226px;top:438px;width:97px;color:#000;"><i class="u">P</i><i class="p">. </i><i class="d">100</i><i class="l">x</i><i class="d">120</i></div>
<div class="c b r" style="left:324px;top:438px;width:48px;color:#000;"><i class="d">2</i><i class="p">,</i><i class="d">340</i></div>
<div class="c" style="left:378px;top:438px;width:69px;color:#000;"><i class="u">MADERA</i></div>
<div class="c b r" style="left:448px;top:438px;width:78px;color:#000;"><i class="d">21</i><i class="p">,</i><i class="d">060</i><i class="p">.</i><i class="d">00</i></div>
<div class="c" style="left:532px;top:438px;width:142px;color:#000;"><i class="u">NAR</i><i class="p">. </i><i class="u">NAVEL</i><i class="p"> </i><i class="u">LANE</i><i class="p">-</i><i class="u">LATE</i></div>
<div class="c" style="left:678px;top:438px;width:129px;color:#000;"><i class="p"> </i><i class="d">36</i><i class="s">/</i><i class="d">40</i><i class="s">/</i><i class="d">44</i><i class="s">/</i><i class="d">48</i></div>
<div class="c" style="left:811px;top:438px;width:82px;color:#000;"><i class="u">SUNFLAVOUR</i></div>
<div class="c" style="left:897px;top:438px;width:80px;color:#000;"><i class="u">ENCAJADO</i><i class="p"> </i><i class="d">9</i><i class="p"> </i><i class="u">KG</i></div>
<div style="position:absolute;left:18px;top:455px;width:101px;height:17px;background:#f8f8ec;"></div>
<div style="position:absolute;left:18px;top:472px;width:983px;height:1px;background:#bcbcbc;"></div>
<div style="position:absolute;left:6px;top:472px;width:11px;height:1px;background:#000;"></div>
<div class="c" style="left:21px;top:456px;width:68px;color:#000;"><i class="d">011403117</i></div>
<div class="c" style="left:93px;top:456px;width:26px;color:#000;"><i class="d">001</i></div>
<div class="c b" style="left:123px;top:456px;width:54px;color:#641876;"><i class="u">DEILOR</i></div>
<div class="c b r" style="left:178px;top:456px;width:42px;color:#000;"><i class="d">3</i><i class="p">.</i><i class="d">00</i></div>
<div class="c" style="left:226px;top:456px;width:97px;color:#000;"><i class="u">EUROPALET</i><i class="p"> </i><i class="u">RETORNABLE</i></div>
<div class="c b r" style="left:324px;top:456px;width:48px;color:#000;"><i class="d">180</i></div>
<div class="c" style="left:378px;top:456px;width:69px;color:#000;"><i class="u">CARTON</i></div>
<div class="c b r" style="left:448px;top:456px;width:78px;color:#000;"><i class="d">1</i><i class="p">,</i><i class="d">800</i><i class="p">.</i><i class="d">00</i></div>
<div class="c" style="left:532px;top:456px;width:142px;color:#000;"><i class="u">LECHUGA</i><i class="p"> </i><i class="u">ICEBERG</i></div>
<div class="c" style="left:678px;top:456px;width:129px;color:#000;"><i class="u">ETIQ</i><i class="p">.</i><i class="u">ALEMAN</i><i class="p"> </i><i class="s">//</i><i class="p"> </i><i class="u">GGN</i></div>
<div class="c" style="left:897px;top:456px;width:80px;color:#000;"><i class="u">FILMADO</i></div>
<div class="c" style="left:981px;top:456px;width:20px;color:#000;"><i class="d">310</i></div>
<div style="position:absolute;left:18px;top:473px;width:101px;height:17px;background:#f8f8ec;"></div>
<div style="position:absolute;left:18px;top:490px;width:983px;height:1px;background:#bcbcbc;"></div>
<div style="position:absolute;left:6px;top:490px;width:11px;height:1px;background:#000;"></div>
<div class="c" style="left:21px;top:474px;width:68px;color:#000;"><i class="d">011403124</i></div>
<div class="c" style="left:93px;top:474px;width:26px;color:#000;"><i class="d">001</i></div>
<div class="c b" style="left:123px;top:474px;width:54px;color:#641876;"><i class="u">JOBAR</i></div>
<div class="c b r" style="left:178px;top:474px;width:42px;color:#000;"><i class="d">20</i><i class="p">.</i><i class="d">00</i></div>
<div class="c" style="left:226px;top:474px;width:97px;color:#000;"><i class="u">P</i><i class="p">. </i><i class="d">100</i><i class="l">x</i><i class="d">120</i></div>
<div class="c b r" style="left:324px;top:474px;width:48px;color:#000;"><i class="d">2</i><i class="p">,</i><i class="d">340</i></div>
<div class="c" style="left:378px;top:474px;width:69px;color:#000;"><i class="u">MADERA</i></div>
<div class="c b r" style="left:448px;top:474px;width:78px;color:#000;"><i class="d">21</i><i class="p">,</i><i class="d">060</i><i class="p">.</i><i class="d">00</i></div>
<div class="c" style="left:532px;top:474px;width:142px;color:#000;"><i class="u">NAR</i><i class="p">. </i><i class="u">NAVEL</i><i class="p"> </i><i class="u">POWELL</i></div>
<div class="c" style="left:678px;top:474px;width:129px;color:#000;"><i class="p"> </i><i class="d">36</i><i class="s">/</i><i class="d">40</i><i class="s">/</i><i class="d">44</i><i class="s">/</i><i class="d">48</i></div>
<div class="c" style="left:811px;top:474px;width:82px;color:#000;"><i class="u">SUNFLAVOUR</i></div>
<div class="c" style="left:897px;top:474px;width:80px;color:#000;"><i class="u">ENCAJADO</i><i class="p"> </i><i class="d">9</i><i class="p"> </i><i class="u">KG</i></div>
<div style="position:absolute;left:18px;top:491px;width:101px;height:17px;background:#f8f8ec;"></div>
<div style="position:absolute;left:18px;top:508px;width:983px;height:1px;background:#bcbcbc;"></div>
<div style="position:absolute;left:6px;top:508px;width:11px;height:1px;background:#000;"></div>
<div class="c" style="left:21px;top:492px;width:68px;color:#000;"><i class="d">011403124</i></div>
<div class="c" style="left:93px;top:492px;width:26px;color:#000;"><i class="d">002</i></div>
<div class="c b" style="left:123px;top:492px;width:54px;color:#641876;"><i class="u">CALAT</i></div>
<div class="c b r" style="left:178px;top:492px;width:42px;color:#000;"><i class="d">20</i><i class="p">.</i><i class="d">00</i></div>
<div class="c" style="left:226px;top:492px;width:97px;color:#000;"><i class="u">P</i><i class="p">. </i><i class="d">100</i><i class="l">x</i><i class="d">120</i></div>
<div class="c b r" style="left:324px;top:492px;width:48px;color:#000;"><i class="d">2</i><i class="p">,</i><i class="d">340</i></div>
<div class="c" style="left:378px;top:492px;width:69px;color:#000;"><i class="u">MADERA</i></div>
<div class="c b r" style="left:448px;top:492px;width:78px;color:#000;"><i class="d">21</i><i class="p">,</i><i class="d">060</i><i class="p">.</i><i class="d">00</i></div>
<div class="c" style="left:532px;top:492px;width:142px;color:#000;"><i class="u">NAR</i><i class="p">. </i><i class="u">NAVEL</i><i class="p"> </i><i class="u">POWELL</i></div>
<div class="c" style="left:678px;top:492px;width:129px;color:#000;"><i class="p"> </i><i class="d">36</i><i class="s">/</i><i class="d">40</i><i class="s">/</i><i class="d">44</i><i class="s">/</i><i class="d">48</i></div>
<div class="c" style="left:811px;top:492px;width:82px;color:#000;"><i class="u">SUNFLAVOUR</i></div>
<div class="c" style="left:897px;top:492px;width:80px;color:#000;"><i class="u">ENCAJADO</i><i class="p"> </i><i class="d">9</i><i class="p"> </i><i class="u">KG</i></div>
<div style="position:absolute;left:89px;top:221px;width:1px;height:288px;background:#bcbcbc;"></div>
<div style="position:absolute;left:119px;top:221px;width:1px;height:288px;background:#bcbcbc;"></div>
<div style="position:absolute;left:177px;top:221px;width:1px;height:288px;background:#bcbcbc;"></div>
<div style="position:absolute;left:222px;top:221px;width:1px;height:288px;background:#bcbcbc;"></div>
<div style="position:absolute;left:323px;top:221px;width:1px;height:288px;background:#bcbcbc;"></div>
<div style="position:absolute;left:374px;top:221px;width:1px;height:288px;background:#bcbcbc;"></div>
<div style="position:absolute;left:447px;top:221px;width:1px;height:288px;background:#bcbcbc;"></div>
<div style="position:absolute;left:528px;top:221px;width:1px;height:288px;background:#bcbcbc;"></div>
<div style="position:absolute;left:674px;top:221px;width:1px;height:288px;background:#bcbcbc;"></div>
<div style="position:absolute;left:807px;top:221px;width:1px;height:288px;background:#bcbcbc;"></div>
<div style="position:absolute;left:893px;top:221px;width:1px;height:288px;background:#bcbcbc;"></div>
<div style="position:absolute;left:977px;top:221px;width:1px;height:288px;background:#bcbcbc;"></div>
<svg style="position:absolute;left:8px;top:385px" width="8" height="12" viewBox="0 0 8 12"><path d="M1.2 1.2 L6.8 6.5 L1.2 11.5" fill="none" stroke="#000" stroke-width="1.2"/><rect x="1.3" y="5.3" width="2" height="2.2" fill="#000"/></svg>
<div style="position:absolute;left:1001px;top:203px;width:17px;height:306px;background-color:#fff;background-image:linear-gradient(45deg,#d4d0c8 25%,transparent 25%,transparent 75%,#d4d0c8 75%),linear-gradient(45deg,#d4d0c8 25%,transparent 25%,transparent 75%,#d4d0c8 75%);background-size:2px 2px;background-position:0 0,1px 1px;"></div>
<div style="position:absolute;left:1001px;top:203px;width:16px;height:16px;background:#d4d0c8;box-shadow:inset 1px 1px 0 #fff, inset -1px -1px 0 #404040, inset -2px -2px 0 #808080;"></div>
<div style="position:absolute;left:1005px;top:209px;width:0;height:0;border-left:4px solid transparent;border-right:4px solid transparent;border-bottom:4px solid #000;"></div>
</body></html>
